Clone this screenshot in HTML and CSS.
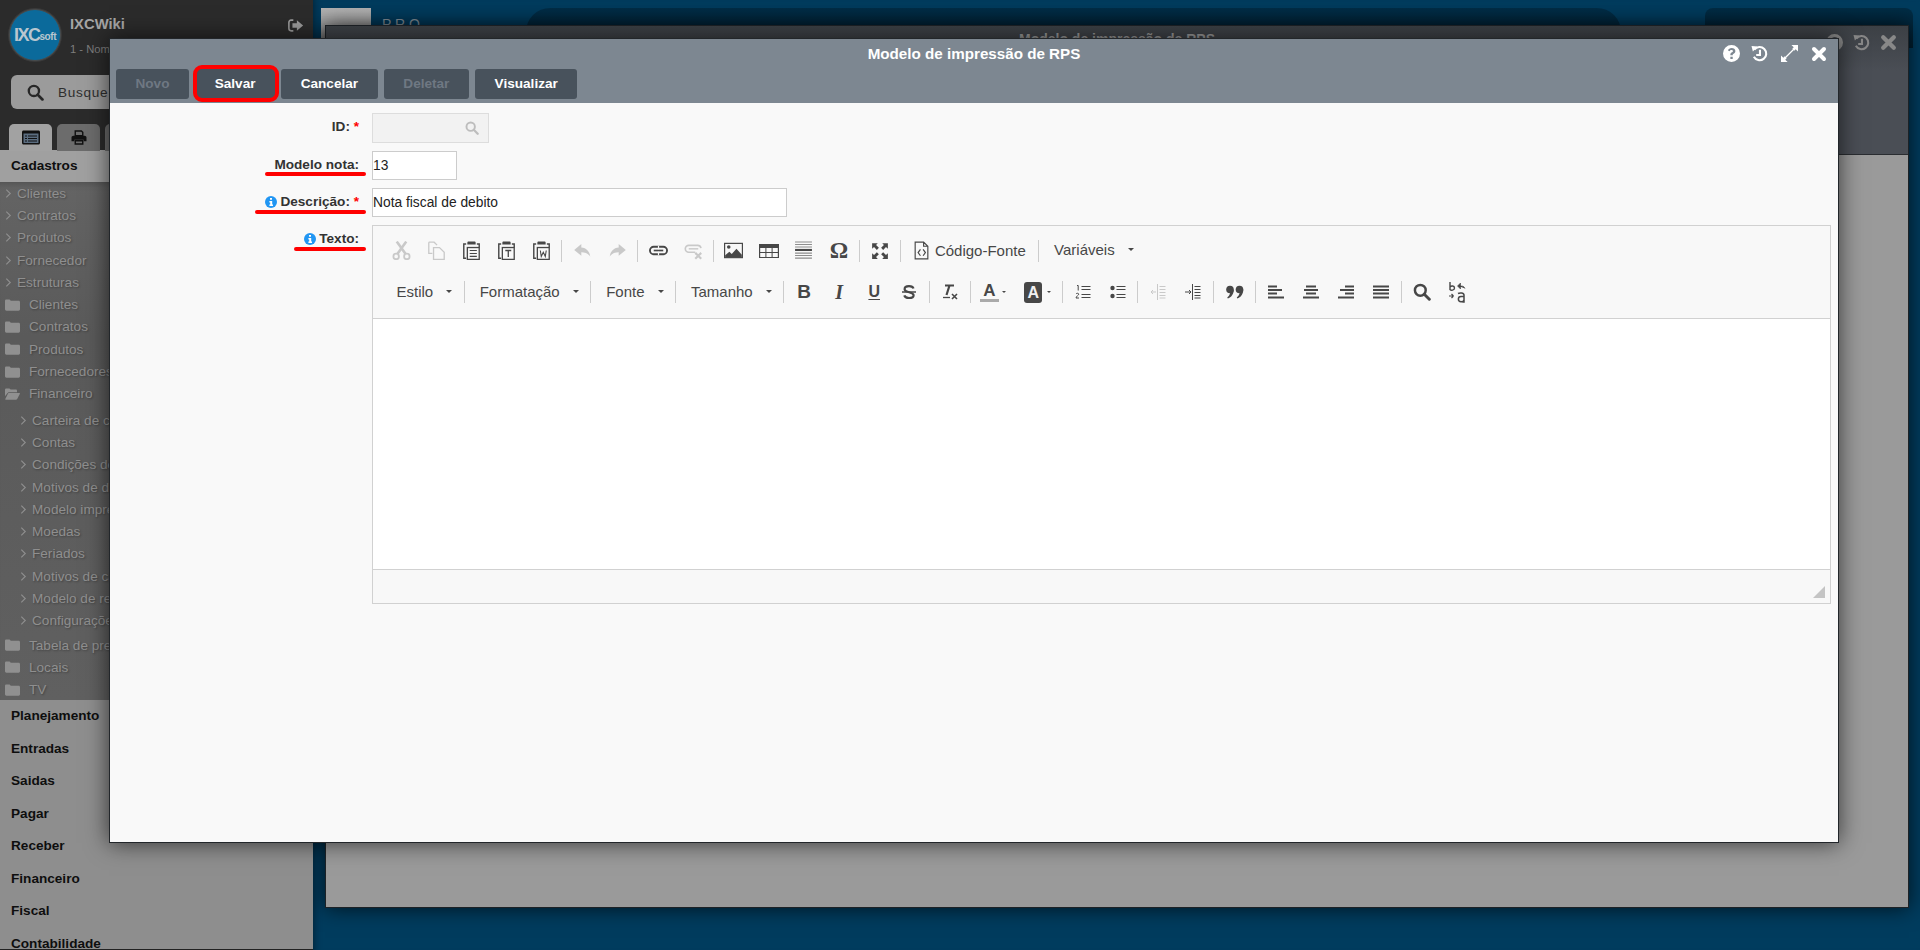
FILE: index.html
```html
<!DOCTYPE html>
<html lang="en">

<head>
    <meta charset="UTF-8">
    <title>Modelo de impressão de RPS</title>
    <link rel="stylesheet" href="styles.css">
</head>

<body>

    <svg class="sprites" width="0" height="0">
        <symbol id="i-search" viewBox="0 0 16 16"><circle cx="6.500" cy="6.500" r="4.800" fill="none" stroke="currentColor" stroke-width="2.200"/><path d="M10 10l4.500 4.500" stroke="currentColor" stroke-width="2.600" stroke-linecap="round"/></symbol>
        <symbol id="i-chevron" viewBox="0 0 8 12"><path d="M1.500 1.500L6 6l-4.500 4.500" fill="none" stroke="currentColor" stroke-width="1.300"/></symbol>
        <symbol id="i-folder" viewBox="0 0 16 14"><path d="M0 2.500C0 1.500.7 1 1.500 1h3.200c.9 0 1.100 1.500 2 1.500h7.800c.9 0 1.500.6 1.500 1.500v7.500c0 .9-.6 1.500-1.500 1.500h-13C.7 13 0 12.400 0 11.500z" fill="currentColor"/></symbol>
        <symbol id="i-folder-open" viewBox="0 0 16 14"><path d="M0 2.500C0 1.500.7 1 1.500 1h3c.9 0 1.100 1.200 2 1.200h5c.8 0 1.300.5 1.300 1.300V5H4.500c-1 0-1.500.5-2 1.200L0 9.500z" fill="currentColor"/><path d="M4 6h11.500c.4 0 .6.400.4.700L13 12.200c-.3.500-.7.800-1.300.8H.8c-.5 0-.7-.4-.5-.7L3 7c.3-.6.500-1 1-1z" fill="currentColor"/></symbol>
        <symbol id="i-history" viewBox="0 0 18 18"><path d="M3.500 5A7 7 0 1 1 3 12.500" fill="none" stroke="currentColor" stroke-width="2.200"/><path d="M.5 1l6.500.5L2 7z" fill="currentColor"/><path d="M9.500 5v5.500H5.500" fill="none" stroke="currentColor" stroke-width="2.200"/></symbol>
        <symbol id="i-close" viewBox="0 0 16 16"><path d="M3 3l10 10M13 3L3 13" stroke="currentColor" stroke-width="4" stroke-linecap="round"/></symbol>
        <symbol id="i-help" viewBox="0 0 18 18"><path fill-rule="evenodd" d="M9 0a9 9 0 1 1 0 18A9 9 0 0 1 9 0zM7.800 12.500v2.400h2.500v-2.400zM9.200 3.300c-2 0-3.300 1-3.900 2.400l1.700 1c.4-.8 1-1.300 2-1.300.8 0 1.500.4 1.500 1.100 0 .6-.4.900-1.100 1.300-1 .6-1.600 1.200-1.600 2.400v.7h2.500v-.5c0-.5.300-.8 1-1.200 1-.6 1.800-1.300 1.800-2.800 0-1.800-1.800-3.100-3.900-3.100z" fill="currentColor"/></symbol>
        <symbol id="i-expand" viewBox="0 0 18 18"><path d="M11 0h7v7l-2.500-2.500-1.500 1.500-2-2 1.500-1.500zM7 18H0v-7l2.500 2.500L4 12l2 2-1.500 1.500z" fill="currentColor"/><path d="M13.500 4.500l-9 9" stroke="currentColor" stroke-width="1.400"/></symbol>
        <symbol id="i-info" viewBox="0 0 12 12"><circle cx="6" cy="6" r="6" fill="#2196f3"/><path d="M5 2h2v1.800H5zM4.400 5h2.800v3.500h.8V10H4.400V8.500h.8v-2h-.8z" fill="#fff"/></symbol>
        <symbol id="i-cut" viewBox="0 0 16 16"><path d="M4 .5l7.500 10.500M12 .5L4.500 11" stroke="currentColor" stroke-width="2.200"/><circle cx="3.500" cy="13" r="2.300" fill="none" stroke="currentColor" stroke-width="1.500"/><circle cx="12.500" cy="13" r="2.300" fill="none" stroke="currentColor" stroke-width="1.500"/></symbol>
        <symbol id="i-copy" viewBox="0 0 16 16"><path d="M1.500 1h4.500l2.500 2.500M1.500 1v9.500h3M5.500 5.500h5l4 4v6h-9z" fill="none" stroke="currentColor" stroke-width="1.100"/></symbol>
        <symbol id="i-paste" viewBox="0 0 16 16"><path d="M3.500 2.500H1.500v12h2M12.500 2.500h2v3" fill="none" stroke="currentColor" stroke-width="1.200"/><path d="M4.500 1.500c0-.6.400-1 1-1h5c.6 0 1 .4 1 1V3h-7z" fill="currentColor"/><rect x="4.500" y="5.500" width="10" height="10" fill="none" stroke="currentColor" stroke-width="1.100"/><path d="M6.500 8h6M6.500 10.500h6M6.500 13h6" stroke="currentColor"/></symbol>
        <symbol id="i-paste-t" viewBox="0 0 16 16"><path d="M3.500 2.500H1.500v12h2M12.500 2.500h2v3" fill="none" stroke="currentColor" stroke-width="1.200"/><path d="M4.500 1.500c0-.6.400-1 1-1h5c.6 0 1 .4 1 1V3h-7z" fill="currentColor"/><rect x="4.500" y="5.500" width="10" height="10" fill="none" stroke="currentColor" stroke-width="1.100"/><path d="M7 8h5M9.500 8v5.500" stroke="currentColor" stroke-width="1.100"/></symbol>
        <symbol id="i-paste-w" viewBox="0 0 16 16"><path d="M3.500 2.500H1.500v12h2M12.500 2.500h2v3" fill="none" stroke="currentColor" stroke-width="1.200"/><path d="M4.500 1.500c0-.6.400-1 1-1h5c.6 0 1 .4 1 1V3h-7z" fill="currentColor"/><rect x="4.500" y="5.500" width="10" height="10" fill="none" stroke="currentColor" stroke-width="1.100"/><path d="M7 8l.8 5 1.700-3.500 1.700 3.500.8-5" fill="none" stroke="currentColor" stroke-width=".9"/></symbol>
        <symbol id="i-undo" viewBox="0 0 16 16"><path d="M7 2.500L1 7.500l6 5V9.500c3 0 5.500.8 7.500 3.500C14 9 11.500 5.800 7 5.500z" fill="currentColor"/></symbol>
        <symbol id="i-redo" viewBox="0 0 16 16"><path d="M9 2.500l6 5-6 5V9.500c-3 0-5.500.8-7.500 3.500C2 9 4.500 5.800 9 5.500z" fill="currentColor"/></symbol>
        <symbol id="i-link" viewBox="0 0 16 16"><rect x=".8" y="4.800" width="14.400" height="6.400" rx="3.200" fill="none" stroke="currentColor" stroke-width="1.600"/><path d="M4 8h8" stroke="currentColor" stroke-width="1.400"/><path d="M8 4v3M8 9v3" stroke="#f8f8f8" stroke-width="1"/></symbol>
        <symbol id="i-unlink" viewBox="0 0 16 16"><path d="M9.500 9.500H4a2.900 2.900 0 0 1 0-5.800h7.500a2.900 2.900 0 0 1 2.800 2.300" fill="none" stroke="currentColor" stroke-width="1.400"/><path d="M4 6.600h8" stroke="currentColor" stroke-width="1.200"/><path d="M9.500 10l5 5M14.500 10l-5 5" stroke="currentColor" stroke-width="1.800"/></symbol>
        <symbol id="i-image" viewBox="0 0 16 16"><rect x=".5" y="2" width="15" height="12" fill="none" stroke="currentColor"/><circle cx="4" cy="5" r="1.500" fill="currentColor"/><path d="M1 13.500v-1.500l3.500-3 2 2 4-4.500 4.500 5v2z" fill="currentColor"/></symbol>
        <symbol id="i-table" viewBox="0 0 20 16"><path d="M0 1h20v14H0z" fill="currentColor"/><path d="M1.200 5h5.200v4H1.200zM7.400 5h5.200v4H7.400zM13.600 5h5.200v4h-5.200zM1.200 10h5.200v4H1.200zM7.400 10h5.200v4H7.400zM13.600 10h5.200v4h-5.200z" fill="#f8f8f8"/></symbol>
        <symbol id="i-hr" viewBox="0 0 16 18"><path d="M0 8.500h16" stroke="currentColor" stroke-width="2"/><path d="M0 1h16M0 3.300h16M0 5.600h16M0 11.500h16M0 13.800h16M0 16.200h16" stroke="currentColor" stroke-width="1" opacity=".6"/></symbol>
        <symbol id="i-fullscreen" viewBox="0 0 16 16"><path d="M1 1h5L4.500 2.700 7 5.200 5.200 7 2.700 4.500 1 6zM15 1v5l-1.700-1.500L10.800 7 9 5.200l2.500-2.500L10 1zM1 15v-5l1.700 1.500L5.200 9 7 10.800l-2.500 2.500L6 15zM15 15h-5l1.500-1.700L9 10.800 10.800 9l2.500 2.500L15 10z" fill="currentColor"/></symbol>
        <symbol id="i-source" viewBox="0 0 16 18"><path d="M2 1h8l4 4v12H2zM10 1v4h4" fill="none" stroke="currentColor" stroke-width="1.100"/><path d="M7 8L4.800 11 7 14M9.500 8l2.200 3-2.200 3" fill="none" stroke="currentColor" stroke-width="1.100"/></symbol>
        <symbol id="i-strike" viewBox="0 0 16 16"><path d="M12.500 4.500C12 3 10.300 2.200 8 2.200c-2.500 0-4.400 1.100-4.400 3 0 3.800 9 2.200 9 6 0 1.700-1.900 2.800-4.600 2.800-2.400 0-4.200-1-4.700-2.600" fill="none" stroke="currentColor" stroke-width="2.200"/><path d="M1 8h14" stroke="currentColor" stroke-width="1.500"/></symbol>
        <symbol id="i-clear" viewBox="0 0 16 16"><path d="M3 1.500h9M7.500 1.500L4.500 11" fill="none" stroke="currentColor" stroke-width="2.200"/><path d="M1 13.500h7" stroke="currentColor" stroke-width="1.300"/><path d="M10 10l5 5M15 10l-5 5" stroke="currentColor" stroke-width="1.600"/></symbol>
        <symbol id="i-ol" viewBox="0 0 16 16"><path d="M6.500 2.500h9M6.500 5.500h9M6.500 10.500h9M6.500 13.500h9" stroke="currentColor" stroke-width="1.200"/><path d="M2 1.500h1.200V6.500M1 10c.5-1 2.700-1 2.700.2 0 1-2.500 2-2.700 3.800h3" fill="none" stroke="currentColor"/></symbol>
        <symbol id="i-ul" viewBox="0 0 16 16"><circle cx="2.500" cy="4" r="2.200" fill="currentColor"/><circle cx="2.500" cy="12" r="2.200" fill="currentColor"/><path d="M6.500 2.500h9M6.500 5.500h9M6.500 10.500h9M6.500 13.500h9" stroke="currentColor" stroke-width="1.200"/></symbol>
        <symbol id="i-outdent" viewBox="0 0 16 16"><path d="M7.500 0v16" stroke="currentColor"/><path d="M9.500 2.500h6M9.500 5.500h6M9.500 8.500h6M9.500 11.500h6M9.500 14h6" stroke="currentColor" stroke-width="1.100"/><path d="M1 8h5M1 8l2-2M1 8l2 2" fill="none" stroke="currentColor"/></symbol>
        <symbol id="i-indent" viewBox="0 0 16 16"><path d="M7.500 0v16" stroke="currentColor"/><path d="M9.500 2.500h6M9.500 5.500h6M9.500 8.500h6M9.500 11.500h6M9.500 14h6" stroke="currentColor" stroke-width="1.100"/><path d="M0 8h6M6 8L4 6M6 8l-2 2" fill="none" stroke="currentColor"/></symbol>
        <symbol id="i-quote" viewBox="0 0 18 16"><circle cx="4" cy="5.500" r="3.800" fill="currentColor"/><circle cx="13.500" cy="5.500" r="3.800" fill="currentColor"/><path d="M7.800 5.500c0 4.500-2.500 8-6 9l-.5-1.200c1.500-1 2.500-2.500 2.700-4zM17.300 5.500c0 4.500-2.500 8-6 9l-.5-1.200c1.500-1 2.500-2.500 2.700-4z" fill="currentColor"/></symbol>
        <symbol id="i-left" viewBox="0 0 16 16"><path d="M0 2.500h9M0 6h14M0 9.500h9M0 13.500h16" stroke="currentColor" stroke-width="2"/></symbol>
        <symbol id="i-center" viewBox="0 0 16 16"><path d="M3 2.500h10M1 6h14M3 9.500h10M0 13.500h16" stroke="currentColor" stroke-width="2"/></symbol>
        <symbol id="i-right" viewBox="0 0 16 16"><path d="M7 2.500h9M2 6h14M7 9.500h9M0 13.500h16" stroke="currentColor" stroke-width="2"/></symbol>
        <symbol id="i-justify" viewBox="0 0 16 16"><path d="M0 2.500h16M0 6h16M0 9.500h16M0 13.500h16" stroke="currentColor" stroke-width="2"/></symbol>
        <symbol id="i-replace" viewBox="0 0 18 22"><path d="M2 1v8M2 6c1-1.500 4.500-1.500 4.500 1S3 9.800 2 8.500" fill="none" stroke="currentColor" stroke-width="1.400"/><path d="M10.500 5h3c1.500 0 3 .8 3.500 2.500M9.500 5l3-3v6z" fill="currentColor" stroke="currentColor" stroke-width=".6"/><path d="M1 15h4.500M5.500 15L3.500 13M5.500 15l-2 2" fill="none" stroke="currentColor" stroke-width="1.200"/><path d="M10 12.500c1.500-.8 6-1 6 1.500V21h-1.500M16 15.500h-3c-3.500 0-3.500 5.200 0 5.200 1.300 0 3-.7 3-2" fill="none" stroke="currentColor" stroke-width="1.500"/></symbol>
    </svg>

    <div class="app">
        <aside class="sidebar">
            <div class="side-top">
                <div class="brand">
                    <div class="logo"><span class="logo-ixc">IXC</span><span class="logo-soft">soft</span></div>
                    <div class="brand-text">
                        <h1>IXCWiki</h1>
                        <p>1 - Nome</p>
                    </div>
                    <svg class="logout" viewBox="0 0 18 16"><path d="M6 2H3.500C2 2 1 3 1 4.500v7C1 13 2 14 3.500 14H6" fill="none" stroke="currentColor" stroke-width="1.800"/><path d="M10 2l7 6-7 6v-3.500H5v-5h5z" fill="currentColor"/></svg>
                </div>
                <div class="search">
                    <svg class="search-icon"><use href="#i-search"/></svg>
                    <span>Busque</span>
                </div>
                <div class="tabs">
                    <div class="tab active">
                        <svg viewBox="0 0 18 14"><path d="M0 1.500C0 .7.700 0 1.500 0h15c.8 0 1.500.7 1.500 1.500v11c0 .8-.7 1.500-1.500 1.500h-15C.7 14 0 13.300 0 12.500z" fill="#111"/><path d="M1.500 3h15v9.500h-15z" fill="#5b6d80"/><path d="M3 5h2v1H3zM6 5h9v1H6zM3 7.500h2v1H3zM6 7.500h9v1H6zM3 10h2v1H3zM6 10h9v1H6z" fill="#111"/></svg>
                    </div>
                    <div class="tab">
                        <svg viewBox="0 0 16 16"><path d="M4 1h6.500L12 2.500V6H4z" fill="none" stroke="#111" stroke-width="1.500"/><path d="M2 6h12c1 0 2 .8 2 2v4h-3v-1.500H3V12H0V8c0-1.200 1-2 2-2z" fill="#111"/><path d="M4 11.500h8V15H4z" fill="none" stroke="#111" stroke-width="1.500"/></svg>
                    </div>
                    <div class="tab"></div>
                </div>
            </div>

            <div class="group-title first">Cadastros</div>
            <ul class="tree">
                <li class="tree-item"><svg class="chevron"><use href="#i-chevron"/></svg>Clientes</li>
                <li class="tree-item"><svg class="chevron"><use href="#i-chevron"/></svg>Contratos</li>
                <li class="tree-item"><svg class="chevron"><use href="#i-chevron"/></svg>Produtos</li>
                <li class="tree-item"><svg class="chevron"><use href="#i-chevron"/></svg>Fornecedor</li>
                <li class="tree-item"><svg class="chevron"><use href="#i-chevron"/></svg>Estruturas</li>
                <li class="tree-item folder"><svg class="folder-icon"><use href="#i-folder"/></svg>Clientes</li>
                <li class="tree-item folder"><svg class="folder-icon"><use href="#i-folder"/></svg>Contratos</li>
                <li class="tree-item folder"><svg class="folder-icon"><use href="#i-folder"/></svg>Produtos</li>
                <li class="tree-item folder"><svg class="folder-icon"><use href="#i-folder"/></svg>Fornecedores</li>
                <li class="tree-item folder"><svg class="folder-icon"><use href="#i-folder-open"/></svg>Financeiro</li>
                <li class="sub-list">
                    <ul>
                        <li class="tree-item sub"><svg class="chevron"><use href="#i-chevron"/></svg>Carteira de cobrança</li>
                        <li class="tree-item sub"><svg class="chevron"><use href="#i-chevron"/></svg>Contas</li>
                        <li class="tree-item sub"><svg class="chevron"><use href="#i-chevron"/></svg>Condições de pagamento</li>
                        <li class="tree-item sub"><svg class="chevron"><use href="#i-chevron"/></svg>Motivos de desconto</li>
                        <li class="tree-item sub"><svg class="chevron"><use href="#i-chevron"/></svg>Modelo impressão</li>
                        <li class="tree-item sub"><svg class="chevron"><use href="#i-chevron"/></svg>Moedas</li>
                        <li class="tree-item sub"><svg class="chevron"><use href="#i-chevron"/></svg>Feriados</li>
                        <li class="tree-item sub"><svg class="chevron"><use href="#i-chevron"/></svg>Motivos de cancelamento</li>
                        <li class="tree-item sub"><svg class="chevron"><use href="#i-chevron"/></svg>Modelo de remessa</li>
                        <li class="tree-item sub"><svg class="chevron"><use href="#i-chevron"/></svg>Configurações</li>
                    </ul>
                </li>
                <li class="tree-item folder"><svg class="folder-icon"><use href="#i-folder"/></svg>Tabela de preços</li>
                <li class="tree-item folder"><svg class="folder-icon"><use href="#i-folder"/></svg>Locais</li>
                <li class="tree-item folder"><svg class="folder-icon"><use href="#i-folder"/></svg>TV</li>
            </ul>
            <div class="group-title">Planejamento</div>
            <div class="group-title">Entradas</div>
            <div class="group-title">Saidas</div>
            <div class="group-title">Pagar</div>
            <div class="group-title">Receber</div>
            <div class="group-title">Financeiro</div>
            <div class="group-title">Fiscal</div>
            <div class="group-title">Contabilidade</div>
        </aside>

        <main class="desktop">
            <div class="back-thumb"></div>
            <div class="back-label">P R O —</div>
            <div class="back-bar"></div>
            <div class="back-user"></div>

            <div class="back-window">
                <div class="back-head">
                    <div class="back-title">Modelo de impressão de RPS</div>
                    <div class="back-icons">
                        <svg><use href="#i-help"/></svg>
                        <svg><use href="#i-history"/></svg>
                        <svg><use href="#i-close"/></svg>
                    </div>
                </div>
            </div>
        </main>
    </div>

    <section class="modal">
        <header class="modal-head">
            <div class="modal-title">Modelo de impressão de RPS</div>
            <div class="modal-icons">
                <svg class="m-help"><use href="#i-help"/></svg>
                <svg class="m-history"><use href="#i-history"/></svg>
                <svg class="m-expand"><use href="#i-expand"/></svg>
                <svg class="m-close"><use href="#i-close"/></svg>
            </div>
            <div class="actions">
                <button class="btn" disabled>Novo</button>
                <button class="btn highlighted">Salvar</button>
                <button class="btn">Cancelar</button>
                <button class="btn" disabled>Deletar</button>
                <button class="btn">Visualizar</button>
            </div>
        </header>

        <div class="form">
            <div class="form-row row-id">
                <label class="form-label">ID: <span class="req">*</span></label>
                <div class="lookup">
                    <svg><use href="#i-search"/></svg>
                </div>
            </div>
            <div class="form-row row-model">
                <label class="form-label">Modelo nota:<span class="mark mark-model"></span></label>
                <input class="field field-short" value="13">
            </div>
            <div class="form-row row-desc">
                <label class="form-label"><svg class="info"><use href="#i-info"/></svg>Descrição: <span class="req">*</span><span class="mark mark-desc"></span></label>
                <input class="field field-long" value="Nota fiscal de debito">
            </div>
            <div class="form-row row-text">
                <label class="form-label"><svg class="info"><use href="#i-info"/></svg>Texto:<span class="mark mark-text"></span></label>

                <div class="editor">
                    <div class="toolbar">
                        <div class="tool-row large">
                            <span class="tool off"><svg><use href="#i-cut"/></svg></span>
                            <span class="tool off"><svg><use href="#i-copy"/></svg></span>
                            <span class="tool"><svg><use href="#i-paste"/></svg></span>
                            <span class="tool"><svg><use href="#i-paste-t"/></svg></span>
                            <span class="tool"><svg><use href="#i-paste-w"/></svg></span>
                            <span class="sep"></span>
                            <span class="tool off"><svg><use href="#i-undo"/></svg></span>
                            <span class="tool off"><svg><use href="#i-redo"/></svg></span>
                            <span class="sep"></span>
                            <span class="tool"><svg><use href="#i-link"/></svg></span>
                            <span class="tool off"><svg><use href="#i-unlink"/></svg></span>
                            <span class="sep"></span>
                            <span class="tool"><svg><use href="#i-image"/></svg></span>
                            <span class="tool"><svg class="wide"><use href="#i-table"/></svg></span>
                            <span class="tool"><svg><use href="#i-hr"/></svg></span>
                            <span class="tool glyph omega">Ω</span>
                            <span class="sep"></span>
                            <span class="tool"><svg class="mid"><use href="#i-fullscreen"/></svg></span>
                            <span class="sep"></span>
                            <span class="tool-text"><svg><use href="#i-source"/></svg>Código-Fonte</span>
                            <span class="sep"></span>
                            <span class="combo">Variáveis<i class="caret"></i></span>
                        </div>
                        <div class="tool-row">
                            <span class="combo">Estilo<i class="caret"></i></span>
                            <span class="sep"></span>
                            <span class="combo">Formatação<i class="caret"></i></span>
                            <span class="sep"></span>
                            <span class="combo">Fonte<i class="caret"></i></span>
                            <span class="sep"></span>
                            <span class="combo">Tamanho<i class="caret"></i></span>
                            <span class="sep"></span>
                            <span class="tool glyph bold">B</span>
                            <span class="tool glyph italic">I</span>
                            <span class="tool glyph underline">U</span>
                            <span class="tool"><svg><use href="#i-strike"/></svg></span>
                            <span class="sep"></span>
                            <span class="tool"><svg><use href="#i-clear"/></svg></span>
                            <span class="sep"></span>
                            <span class="tool color"><span class="color-a">A</span><i class="caret small"></i></span>
                            <span class="tool color"><span class="color-bg">A</span><i class="caret small"></i></span>
                            <span class="sep"></span>
                            <span class="tool"><svg><use href="#i-ol"/></svg></span>
                            <span class="tool"><svg><use href="#i-ul"/></svg></span>
                            <span class="sep"></span>
                            <span class="tool off"><svg><use href="#i-outdent"/></svg></span>
                            <span class="tool"><svg><use href="#i-indent"/></svg></span>
                            <span class="sep"></span>
                            <span class="tool tool-quote"><svg class="mid"><use href="#i-quote"/></svg></span>
                            <span class="sep"></span>
                            <span class="tool"><svg><use href="#i-left"/></svg></span>
                            <span class="tool"><svg><use href="#i-center"/></svg></span>
                            <span class="tool"><svg><use href="#i-right"/></svg></span>
                            <span class="tool"><svg><use href="#i-justify"/></svg></span>
                            <span class="sep"></span>
                            <span class="tool"><svg class="mid"><use href="#i-search"/></svg></span>
                            <span class="tool"><svg class="tall"><use href="#i-replace"/></svg></span>
                        </div>
                    </div>
                    <div class="editor-body"></div>
                    <div class="editor-foot"><span class="resizer"></span></div>
                </div>
            </div>
        </div>
    </section>

</body>

</html>
```

FILE: styles.css
```css
* {
    margin: 0;
    padding: 0;
    box-sizing: border-box;
    font-family: "Liberation Sans", Arial, sans-serif;
}

html,
body {
    height: 100%;
    overflow: hidden;
}

ul {
    list-style: none;
}

.sprites {
    position: absolute;
}

.app {
    display: flex;
    height: 950px;
}

/* sidebar */
.sidebar {
    width: 313px;
    height: 950px;
    flex-shrink: 0;
    overflow: hidden;
    background-color: #8e8e8e;
    border-bottom: 1px solid #222;
}

.side-top {
    height: 150px;
    background-color: #2b2b2b;
    padding: 9px 0 0 9px;
}

.brand {
    display: flex;
    align-items: flex-start;
}

.logo {
    width: 52px;
    height: 52px;
    flex-shrink: 0;
    border-radius: 50%;
    background-color: #0b6a9b;
    border: 1px solid #4a4a4a;
    display: flex;
    align-items: center;
    justify-content: center;
    color: #b9c6cf;
    box-shadow: 0 0 0 1px #3a3a3a;
}

.logo-ixc {
    font-size: 18px;
    font-weight: 700;
    letter-spacing: -1.500px;
}

.logo-soft {
    font-size: 10px;
    font-weight: 700;
    margin-top: 3px;
    letter-spacing: -.4px;
}

.brand-text {
    margin-left: 9px;
    flex: 1;
}

.brand-text h1 {
    font-size: 14.800px;
    font-weight: 700;
    color: #a5a5a5;
    line-height: 17px;
    margin-top: 7px;
}

.brand-text p {
    font-size: 11.200px;
    color: #7d7d7d;
    margin-top: 10px;
}

.logout {
    width: 16px;
    height: 15px;
    color: #9c9c9c;
    margin: 9px 9px 0 0;
}

.search {
    display: flex;
    align-items: center;
    width: 285px;
    height: 34px;
    margin: 14px 0 0 2px;
    padding-left: 16px;
    background-color: #9b9b9b;
    border-radius: 6px;
    color: #2e2e2e;
    font-size: 13.600px;
    letter-spacing: .7px;
}

.search-icon {
    width: 17px;
    height: 17px;
    margin-right: 14px;
    color: #272727;
}

.tabs {
    display: flex;
    gap: 5px;
    margin-top: 15px;
}

.tab {
    width: 43px;
    height: 27px;
    background-color: #6c6c6c;
    border-radius: 5px 5px 0 0;
    display: flex;
    align-items: center;
    justify-content: center;
}

.tab.active {
    background-color: #a2a2a2;
}

.tab svg {
    width: 18px;
    height: 15px;
}

.group-title {
    height: 32.500px;
    line-height: 32px;
    padding-left: 11px;
    font-size: 13.600px;
    font-weight: 700;
    color: #0e0e0e;
}

.group-title.first {
    height: 33px;
    line-height: 32px;
    background-color: #a0a0a0;
}

.tree {
    height: 518px;
    background: linear-gradient(#646464, #5a5a5a 30%, #606060);
    box-shadow: inset 0 8px 8px -8px rgba(0, 0, 0, .3);
}

.tree-item {
    display: flex;
    align-items: center;
    height: 22.300px;
    padding-left: 5px;
    font-size: 13.600px;
    color: #8f8f8f;
    white-space: nowrap;
    text-shadow: 1px 1px 2px rgba(0, 0, 0, .3);
}

.tree > .tree-item:first-child {
    margin-top: -1px;
}

.tree-item.folder {
    padding-left: 5px;
}

.tree-item.sub {
    padding-left: 20px;
}

.sub-list {
    padding: 4px 0 2px;
}

.chevron {
    width: 7px;
    height: 11px;
    margin-right: 5px;
    color: #8f8f8f;
}

.folder-icon {
    width: 15px;
    height: 14px;
    margin-right: 9px;
    color: #909090;
}

/* the window behind the modal */
.desktop {
    flex: 1;
    position: relative;
    background-color: #003c5e;
    overflow: hidden;
    box-shadow: inset 8px 0 8px -8px rgba(0, 0, 0, .5);
}

.back-thumb {
    position: absolute;
    left: 8px;
    top: 8px;
    width: 50px;
    height: 40px;
    background: linear-gradient(#b3b3b3, #8d8d8d);
}

.back-label {
    position: absolute;
    left: 69px;
    top: 16px;
    font-size: 14px;
    color: #8b99a3;
}

.back-bar {
    position: absolute;
    left: 213px;
    top: 8px;
    width: 1095px;
    height: 40px;
    border-radius: 24px 24px 0 0;
    background: linear-gradient(#002e48, #001e30);
}

.back-user {
    position: absolute;
    left: 1392px;
    top: 8px;
    width: 208px;
    height: 40px;
    border-radius: 8px 8px 0 0;
    background: linear-gradient(#002d46, #001e30);
}

.back-window {
    position: absolute;
    left: 12px;
    top: 25px;
    width: 1584px;
    height: 883px;
    background-color: #9a9a9a;
    border: 1px solid #1d2226;
    box-shadow: 0 0 20px rgba(0, 0, 0, .7);
}

.back-head {
    height: 129px;
    background: linear-gradient(#3c4045, #4a4e55 35%);
    border-bottom: 1px solid #2a2d31;
    position: relative;
}

.back-title {
    text-align: center;
    font-size: 14px;
    font-weight: 700;
    color: #9a9a9a;
    padding-top: 5px;
}

.back-icons {
    position: absolute;
    right: 11px;
    top: 8px;
    display: flex;
    gap: 10px;
    color: #888;
}

.back-icons svg {
    width: 17px;
    height: 17px;
}

/* modal */
.modal {
    position: absolute;
    left: 109px;
    top: 38px;
    width: 1730px;
    height: 805px;
    background-color: #f9f9f9;
    border: 1px solid #22262a;
    box-shadow: 0 0 22px rgba(0, 0, 0, .65);
}

.modal-head {
    height: 64px;
    background-color: #7d8791;
    position: relative;
}

.modal-title {
    text-align: center;
    color: #fff;
    font-size: 15.200px;
    font-weight: 700;
    line-height: 30px;
}

.modal-icons {
    position: absolute;
    right: 11px;
    top: 6px;
    display: flex;
    align-items: center;
    color: #fff;
}

.modal-icons svg {
    width: 17px;
    height: 17px;
    margin-left: 11px;
}

.modal-icons .m-expand {
    margin-left: 13px;
}

.modal-icons .m-close {
    margin-left: 13px;
    width: 16px;
    height: 16px;
}

.actions {
    display: flex;
    gap: 6.200px;
    padding-left: 6px;
}

.btn {
    height: 30px;
    padding: 0 19.500px 2px;
    border: none;
    border-radius: 3px;
    background-color: #48525c;
    color: #fff;
    font-size: 13.600px;
    font-weight: 700;
    position: relative;
}

.btn:disabled {
    color: #6f7883;
}

.highlighted::after {
    content: "";
    position: absolute;
    left: -2px;
    right: -4px;
    top: -4px;
    bottom: -3px;
    border: 4px solid #f00;
    border-radius: 9px;
}

.form {
    padding-top: 10px;
    padding-right: 7px;
}

.form-row {
    display: flex;
    align-items: flex-start;
}

.form-label {
    width: 250px;
    margin-right: 12px;
    padding-top: 6px;
    padding-right: 1px;
    text-align: right;
    font-size: 13.600px;
    font-weight: 700;
    color: #333;
    position: relative;
}

.req {
    color: #f00;
}

.info {
    width: 12px;
    height: 12px;
    margin-right: 3px;
    vertical-align: -1.500px;
}

.mark {
    position: absolute;
    right: -6px;
    height: 4px;
    background-color: #f00;
    border-radius: 2px;
}

.mark-model {
    width: 101px;
    top: 21px;
}

.mark-desc {
    width: 111px;
    top: 22px;
}

.mark-text {
    width: 72px;
    top: 22px;
}

.row-id {
    height: 38px;
}

.row-model {
    height: 37px;
}

.row-desc {
    height: 37px;
}

.lookup {
    width: 117px;
    height: 30px;
    background-color: #f2f2f2;
    border: 1px solid #ddd;
    display: flex;
    align-items: center;
    justify-content: flex-end;
    padding-right: 9px;
    color: #bdbdbd;
}

.lookup svg {
    width: 14px;
    height: 14px;
}

.field {
    height: 29px;
    border: 1px solid #ccc;
    background-color: #fff;
    padding: 0;
    font-size: 13.800px;
    color: #222;
}

.field-short {
    width: 85px;
}

.field-long {
    width: 415px;
}

/* editor */
.editor {
    flex: 1;
    height: 379px;
    border: 1px solid #d1d1d1;
    display: flex;
    flex-direction: column;
}

.toolbar {
    height: 93px;
    background-color: #f8f8f8;
    border-bottom: 1px solid #d1d1d1;
    padding: 4px 0 0 11px;
}

.tool-row {
    display: flex;
    align-items: center;
    height: 41.500px;
}

.tool {
    width: 35px;
    height: 24px;
    flex-shrink: 0;
    display: flex;
    align-items: center;
    justify-content: center;
    color: #474747;
}

.tool svg {
    width: 16px;
    height: 16px;
}

.tool-row.large .tool svg {
    width: 19px;
    height: 19px;
}

.tool svg.mid,
.tool-row.large .tool svg.mid {
    width: 18px;
    height: 18px;
}

.tool-row.large .tool svg.wide {
    width: 20px;
    height: 16px;
}

.tool svg.tall {
    width: 18px;
    height: 22px;
}

.tool.off {
    color: #c9c9c9;
}

.tool.color {
    width: 43px;
    justify-content: flex-start;
    padding-left: 7px;
}

.tool-quote {
    width: 36px;
}

.sep {
    width: 1px;
    height: 22px;
    margin: 0 2.400px;
    background-color: #ccc;
    flex-shrink: 0;
}

.tool-text,
.combo {
    display: flex;
    align-items: center;
    height: 24px;
    font-size: 15px;
    color: #474747;
    white-space: nowrap;
}

.tool-text {
    padding: 0 10px 0 10px;
}

.tool-text svg {
    width: 17px;
    height: 19px;
    margin-right: 5px;
    color: #474747;
}

.combo {
    padding: 0 9.200px 0 12.500px;
    margin-top: -2px;
}

.caret {
    width: 0;
    height: 0;
    margin-left: 13px;
    border: 3px solid transparent;
    border-top-color: #474747;
    border-bottom: none;
}

.caret.small {
    margin-left: 3px;
    border-width: 2.500px;
    border-bottom: none;
}

.glyph {
    font-size: 18px;
    font-weight: 700;
}

.omega {
    font-family: "Liberation Serif", serif;
    font-size: 23px;
}

.bold {
    font-size: 19px;
}

.italic {
    font-style: italic;
    font-family: "Liberation Serif", serif;
    font-size: 20px;
}

.underline {
    font-size: 16px;
    text-decoration: underline;
    text-underline-offset: 2px;
}

.color-a {
    font-size: 17px;
    font-weight: 700;
    color: #474747;
    border-bottom: 3px solid #aaa;
    line-height: 17px;
    padding: 0 3px;
}

.color-bg {
    width: 18px;
    height: 21px;
    margin-left: 1px;
    margin-right: 2px;
    border-radius: 3px;
    background-color: #474747;
    color: #f0f0f0;
    font-size: 16px;
    font-weight: 700;
    text-align: center;
    line-height: 21px;
}

.editor-body {
    flex: 1;
    background-color: #fff;
}

.editor-foot {
    height: 34px;
    background-color: #f8f8f8;
    border-top: 1px solid #d1d1d1;
    position: relative;
}

.resizer {
    position: absolute;
    right: 5px;
    bottom: 5px;
    width: 0;
    height: 0;
    border-left: 12px solid transparent;
    border-bottom: 12px solid #c4c4c4;
}
```
